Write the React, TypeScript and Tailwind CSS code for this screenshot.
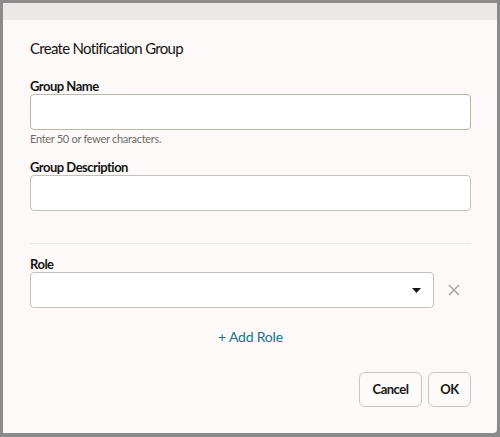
import React from 'react';

const font = { fontFamily: 'Lato, "Noto Sans", sans-serif' };

const Field = ({ label, className = '' }: { label: string; className?: string }) => (
  <div className={className}>
    <div className="text-[13px] leading-[16px] font-bold tracking-[-0.5px] text-[#161513]">{label}</div>
    <div className="h-[36px] rounded-[4px] border border-[#c3c0bb] bg-white" />
  </div>
);

export default function App() {
  return (
    <div className="w-[500px] h-[437px] bg-[#8b8b8b] pt-[3px] pl-[3px] pr-[3px] pb-[4px]" style={font}>
      <div className="flex h-full flex-col bg-[#fcf9f8] rounded-br-[4px]">
        <div className="h-[17px] bg-[#ebe9e7]" />
        <div className="flex flex-1 flex-col pl-[27px] pr-[26px] pt-[16px]">
          <h1 className="text-[15px] leading-[24px] tracking-[-0.7px] text-[#161513]">Create Notification Group</h1>

          <div className="mt-[18px]">
            <div className="text-[13px] leading-[16px] font-bold tracking-[-0.5px] text-[#161513]">Group Name</div>
            <div className="h-[36px] rounded-[4px] border border-[#b5baa6] bg-white" />
            <div className="mt-[3px] text-[11px] leading-[12px] tracking-[-0.3px] text-[#6f6c69]">Enter 50 or fewer characters.</div>
          </div>

          <Field label="Group Description" className="mt-[14px]" />

          <div className="mt-[32px] h-px bg-[#ebe7e4]" />

          <div className="mt-[12px]">
            <div className="text-[13px] leading-[16px] font-bold tracking-[-0.5px] text-[#161513]">Role</div>
            <div className="flex items-center">
              <div className="flex h-[36px] w-[404px] items-center justify-end rounded-[4px] border border-[#c3c0bb] bg-white pr-[12px]">
                <svg width="9" height="5" viewBox="0 0 9 5">
                  <path d="M0 0h9L4.5 5z" fill="#161513" />
                </svg>
              </div>
              <button className="ml-[13px] flex h-[13px] w-[13px] items-center justify-center">
                <svg width="12" height="12" viewBox="0 0 12 12">
                  <path d="M1 1l10 10M11 1L1 11" stroke="#a9a5a1" strokeWidth="1.5" />
                </svg>
              </button>
            </div>
          </div>

          <div className="mt-[19px] text-center text-[14px] leading-[20px] tracking-[-0.2px] text-[#23718f]">+ Add Role</div>

          <div className="mt-[25px] flex justify-end gap-[6px]">
            <button className="h-[35px] w-[63px] rounded-[6px] border border-[#cac6c2] bg-[#fcfbfa] text-[13px] font-bold tracking-[-0.5px] text-[#161513]">
              Cancel
            </button>
            <button className="h-[35px] w-[43px] rounded-[6px] border border-[#cac6c2] bg-[#fcfbfa] text-[13px] font-bold tracking-[-0.5px] text-[#161513]">
              OK
            </button>
          </div>
        </div>
      </div>
    </div>
  );
}
